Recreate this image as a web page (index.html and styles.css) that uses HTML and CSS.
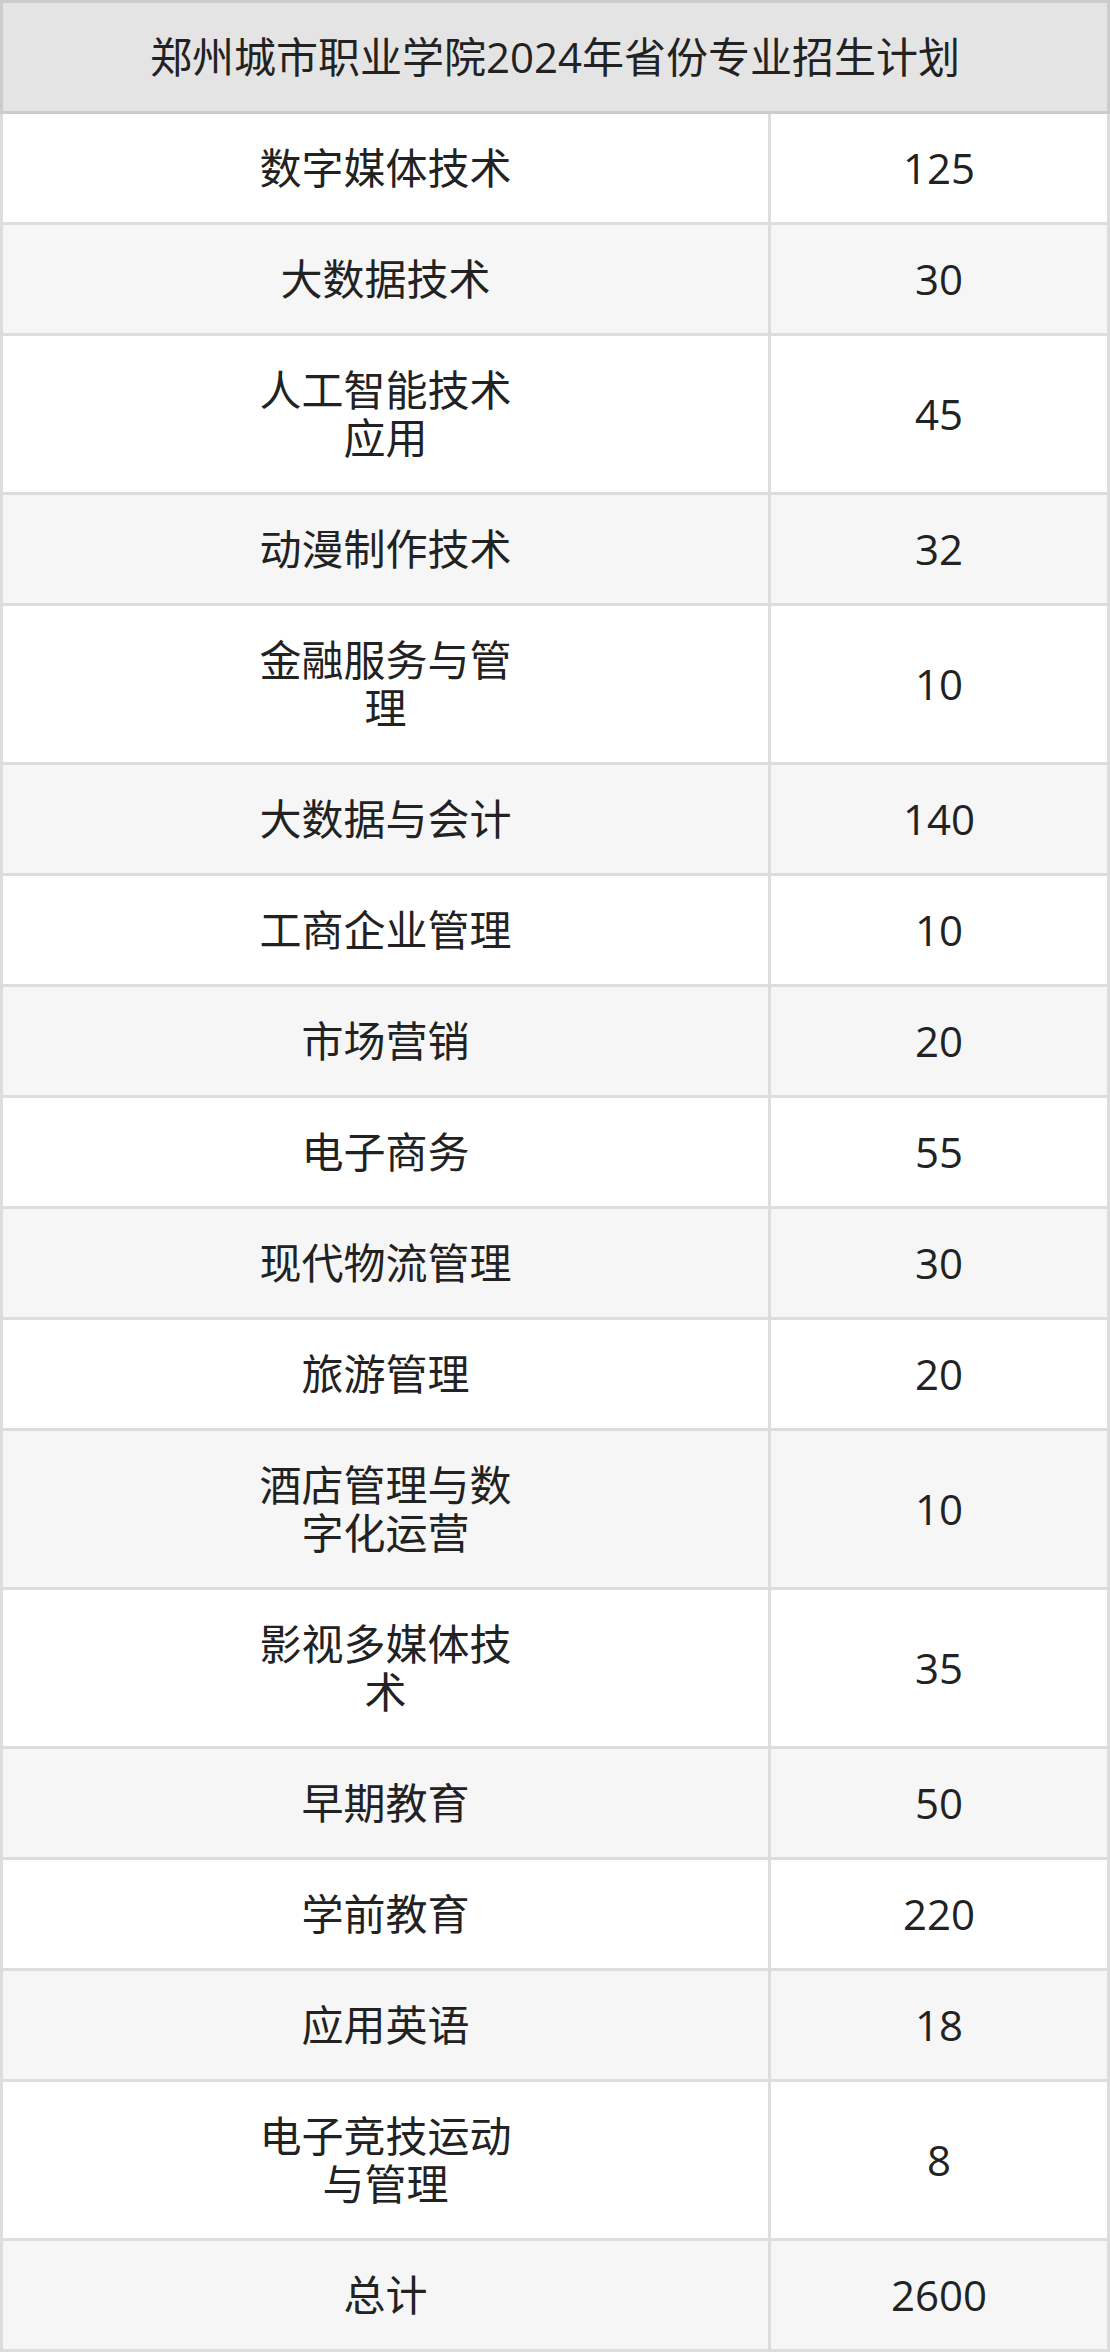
FILE: index.html
```html
<!DOCTYPE html>
<html lang="zh-CN">
<head>
<meta charset="utf-8">
<title>郑州城市职业学院2024年省份专业招生计划</title>
<link rel="stylesheet" href="styles.css">
</head>
<body>
<table class="plan">
  <colgroup>
    <col class="col-name">
    <col class="col-num">
  </colgroup>
  <thead>
    <tr><th colspan="2">郑州城市职业学院2024年省份专业招生计划</th></tr>
  </thead>
  <tbody>
    <tr><td><div class="name">数字媒体技术</div></td><td>125</td></tr>
    <tr><td><div class="name">大数据技术</div></td><td>30</td></tr>
    <tr><td><div class="name">人工智能技术应用</div></td><td>45</td></tr>
    <tr><td><div class="name">动漫制作技术</div></td><td>32</td></tr>
    <tr><td><div class="name">金融服务与管理</div></td><td>10</td></tr>
    <tr><td><div class="name">大数据与会计</div></td><td>140</td></tr>
    <tr><td><div class="name">工商企业管理</div></td><td>10</td></tr>
    <tr><td><div class="name">市场营销</div></td><td>20</td></tr>
    <tr><td><div class="name">电子商务</div></td><td>55</td></tr>
    <tr><td><div class="name">现代物流管理</div></td><td>30</td></tr>
    <tr><td><div class="name">旅游管理</div></td><td>20</td></tr>
    <tr><td><div class="name">酒店管理与数字化运营</div></td><td>10</td></tr>
    <tr><td><div class="name">影视多媒体技术</div></td><td>35</td></tr>
    <tr><td><div class="name">早期教育</div></td><td>50</td></tr>
    <tr><td><div class="name">学前教育</div></td><td>220</td></tr>
    <tr><td><div class="name">应用英语</div></td><td>18</td></tr>
    <tr><td><div class="name">电子竞技运动与管理</div></td><td>8</td></tr>
    <tr><td><div class="name">总计</div></td><td>2600</td></tr>
  </tbody>
</table>
</body>
</html>
```

FILE: styles.css
```css
html, body {
  margin: 0;
  padding: 0;
  background: #ffffff;
}

.plan {
  width: 1110px;
  border-collapse: collapse;
  table-layout: fixed;
  font-family: "Open Sans", "Noto Sans CJK SC", sans-serif;
  font-size: 42px;
  line-height: 48px;
  color: #222222;
}

.col-name { width: 768px; }
.col-num { width: 339px; }

.plan th,
.plan td {
  border: 3px solid #dddddd;
  padding: 30px 0;
  text-align: center;
  vertical-align: middle;
  font-weight: normal;
}

.plan th {
  background: #e4e4e4;
  border-color: #cccccc;
}

.plan tbody tr:nth-child(odd) td { background: #ffffff; }
.plan tbody tr:nth-child(even) td { background: #f6f6f6; }

.name {
  max-width: 264px;
  margin: 0 auto;
}
```
